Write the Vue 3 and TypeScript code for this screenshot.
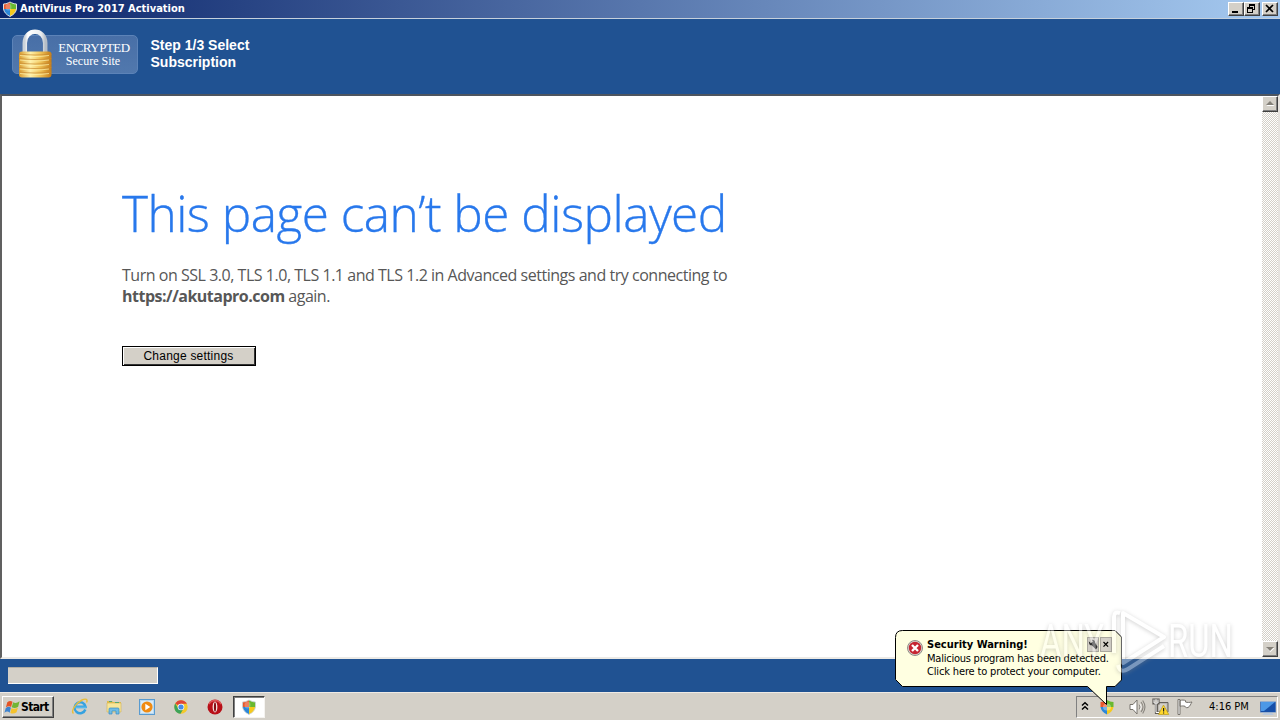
<script setup lang="ts">
const title = 'AntiVirus Pro 2017 Activation'
const host = 'https://akutapro.com'
const shieldParts = [
  { fill: '#e8572c', d: 'M8 1C6 2 4 3 1.500 3V8H8Z' },
  { fill: '#69b82f', d: 'M8 1C10 2 12 3 14.500 3V8H8Z' },
  { fill: '#2c87d8', d: 'M1.500 8H8V15.500C4 13.500 2 11 1.500 8Z' },
  { fill: '#f6c91c', d: 'M8 8H14.500C14 11 12 13.500 8 15.500Z' },
]
const lockBands = [54, 58.5, 63, 67.5, 72]
</script>

<template>
  <div class="screen">
    <header class="titlebar">
      <svg class="shield" viewBox="0 0 16 16"><path v-for="p in shieldParts" :key="p.fill" :fill="p.fill" :d="p.d" /><path d="M8 1C10 2 12 3 14.500 3V8C14 11 12 13.500 8 15.500C4 13.500 2 11 1.500 8V3C4 3 6 2 8 1Z" fill="none" stroke="#d9dde0" stroke-width="1" /><ellipse cx="6.500" cy="6" rx="3" ry="3.500" fill="#fff" opacity=".25" /></svg>
      <span class="title-text">{{ title }}</span>
      <div class="controls">
        <button class="ctl"><svg viewBox="0 0 14 12" shape-rendering="crispEdges"><path d="M3 8h6v2H3z" /></svg></button>
        <button class="ctl"><svg viewBox="0 0 14 12" shape-rendering="crispEdges"><path d="M4 1h6v6H8V6h1V3H5v1H4zM2 4h6v6H2zM3 6v3h4V6z" fill-rule="evenodd" /></svg></button>
        <button class="ctl close"><svg viewBox="0 0 14 12"><path d="M3 2l7 7M10 2l-7 7" stroke="#000" stroke-width="1.700" /></svg></button>
      </div>
    </header>

    <section class="banner">
      <div class="badge">
        <span class="enc">ENCRYPTED</span>
        <span class="secure">Secure Site</span>
        <svg class="lock" viewBox="17 28 36 52">
          <defs>
            <linearGradient id="gold"><stop offset="0" stop-color="#d89a2c" /><stop offset=".35" stop-color="#fff0a8" /><stop offset=".65" stop-color="#f0c45a" /><stop offset="1" stop-color="#c47b16" /></linearGradient>
            <linearGradient id="steel"><stop offset="0" stop-color="#ccd3da" /><stop offset=".15" stop-color="#fff" /><stop offset=".8" stop-color="#e9edf0" /><stop offset="1" stop-color="#b6bec7" /></linearGradient>
          </defs>
          <path d="M24.800 53V43C24.800 28 45.200 28 45.200 43V53" fill="none" stroke="url(#steel)" stroke-width="4.500" />
          <rect x="19" y="51.500" width="32.500" height="26" rx="3" fill="url(#gold)" />
          <path v-for="y in lockBands" :key="y" :d="`M19 ${y}Q35 ${y + 2} 51.500 ${y}`" fill="none" stroke="#c88930" stroke-width="1.200" opacity=".7" />
          <path v-for="y in lockBands" :key="'h' + y" :d="`M20 ${y + 1.500}Q35 ${y + 3.500} 49 ${y + 1.500}`" fill="none" stroke="#fff3ae" stroke-width="1.200" opacity=".7" />
        </svg>
      </div>
      <div class="step">Step 1/3 Select<br>Subscription</div>
    </section>

    <main class="viewport">
      <article class="page">
        <h1><span>This page can’t be displayed</span></h1>
        <p class="line first">Turn on SSL 3.0, TLS 1.0, TLS 1.1 and TLS 1.2 in Advanced settings and try connecting to</p>
        <p class="line second"><b>{{ host }}</b> <span>again.</span></p>
        <button class="change">Change settings</button>
      </article>
      <div class="scrollbar">
        <button class="arrow"><svg viewBox="0 0 12 12"><path d="M2.500 8h8L6.500 4z" fill="#fff" /><path d="M2 7h8L6 3z" fill="#848078" /></svg></button>
        <button class="arrow"><svg viewBox="0 0 12 12"><path d="M2.500 5h8L6.500 9z" fill="#fff" /><path d="M2 4h8L6 8z" fill="#848078" /></svg></button>
      </div>
    </main>

    <footer class="bottom"><div class="progress"></div></footer>

    <nav class="taskbar">
      <button class="start">
        <svg viewBox="0 0 18 16"><path d="M3.500 3Q6.500 .5 9 2.500L7.500 8Q5 6 2 8.500Z" fill="#e45425" /><path d="M9.700 3Q12.500 5 16.500 2L15 7.700Q11.500 10 8.200 8.300Z" fill="#72b535" /><path d="M1.800 9.200Q5 6.700 7.300 8.700L6 14Q3.500 11.500 .5 14Z" fill="#3d83cf" /><path d="M8 9Q11 11 14.800 8.500L13.300 13.500Q10 16 6.700 14.300Z" fill="#f5c22c" /></svg>
        <span>Start</span>
      </button>
      <div class="launch">
        <svg viewBox="0 0 18 18"><path d="M14.300 11.500A5.500 5.500 0 1 1 14.500 8.700H5" fill="none" stroke="#36a2e0" stroke-width="2.500" /><path d="M4.200 9.500H15.500" stroke="#55b8ec" stroke-width="1.800" /><path d="M2.500 15.500C-.5 13 5 5 11 2C15 .2 17 1.500 15.500 4.500" fill="none" stroke="#e9bd37" stroke-width="1.400" /></svg>
        <svg viewBox="0 0 18 18"><path d="M2 3h5l1 1h8v10H2z" fill="#e1bc50" /><path d="M2 5h14v9H2z" fill="#f7e69a" stroke="#d4b452" stroke-width=".6" /><path d="M4 3.500h3M10 4.500h4" stroke="#58a773" /><path d="M4 16v-5q0-1 1-1h8q1 0 1 1v5h-3v-3H7v3z" fill="#70bce5" stroke="#358cc4" stroke-width=".7" /></svg>
        <svg viewBox="0 0 18 18"><rect x="1.500" y="1.500" width="15" height="15" fill="#b8d8f0" stroke="#599bd0" /><rect x="3" y="3" width="12" height="12" fill="#d8ebf8" /><circle cx="9" cy="9" r="5.600" fill="#f08b12" /><path d="M7.300 5.800L12.300 9l-5 3.200z" fill="#fff" /></svg>
        <svg viewBox="0 0 18 18"><circle cx="9" cy="9" r="6.700" fill="#f4c92b" /><path d="M9 9L3.200 5.600A6.700 6.700 0 0 1 14.900 5.800H9Z" fill="#df4338" /><path d="M3.200 5.600A6.700 6.700 0 0 0 8.500 15.700L11.500 10.500L6 10Z" fill="#3da35a" /><circle cx="9" cy="9" r="3.300" fill="#fff" /><circle cx="9" cy="9" r="2.600" fill="#478be6" /></svg>
        <svg viewBox="0 0 18 18"><circle cx="9" cy="9" r="7.500" fill="#b80f18" /><path d="M3 6a7 7 0 0 1 12 0" fill="none" stroke="#f07474" stroke-width="1.500" opacity=".7" /><ellipse cx="9" cy="9" rx="2.400" ry="5.400" fill="#f9e7e5" /><ellipse cx="9" cy="9" rx="1.100" ry="4.700" fill="#830c12" /></svg>
      </div>
      <div class="task-active">
        <svg class="shield" viewBox="0 0 16 16"><path v-for="p in shieldParts" :key="p.fill" :fill="p.fill" :d="p.d" /><path d="M8 1C10 2 12 3 14.500 3V8C14 11 12 13.500 8 15.500C4 13.500 2 11 1.500 8V3C4 3 6 2 8 1Z" fill="none" stroke="#c9d3da" stroke-width=".8" /><ellipse cx="6.500" cy="6" rx="3" ry="3.500" fill="#fff" opacity=".25" /></svg>
      </div>
      <div class="tray">
        <svg class="chev" viewBox="0 0 8 10"><path d="M1 4.500L4 1.800L7 4.500M1 8.500L4 5.800L7 8.500" fill="none" stroke="#000" stroke-width="1.500" /></svg>
        <svg class="shield tray-shield" viewBox="0 0 16 16"><path v-for="p in shieldParts" :key="p.fill" :fill="p.fill" :d="p.d" /><ellipse cx="8" cy="8" rx="4" ry="3.500" fill="#fff" opacity=".35" /></svg>
        <svg class="speaker" viewBox="0 0 18 18"><path d="M2 6.500h3L9 2v14l-4-4.500H2z" fill="#fff" stroke="#77736c" stroke-width="1" /><path d="M11 6.500q2 2.500 0 5M13 4q4 5 0 10M14.700 2.500q4.500 6.500 0 13" fill="none" stroke="#87837d" stroke-width="1.100" /><path d="M12 6q2.500 3 0 6" fill="none" stroke="#fff" stroke-width=".8" /></svg>
        <svg class="network" viewBox="0 0 18 18"><path d="M5.500 4.500h10.500v9.500H5.500z" fill="#bcb8b1" stroke="#65625c" /><path d="M7 6h7.500v6H7z" fill="#d3d0ca" /><path d="M1.500 1.500h5v4h-5zM4 5.500v9.500h3" fill="none" stroke="#5e5b56" stroke-width="2.200" /><path d="M2 1.500v3.500h4V1.500M4 1v2M4 5v9.500h3" fill="none" stroke="#fff" stroke-width="1" /><path d="M11.500 7L16.800 16.500H6.500z" fill="#ffd72b" stroke="#b99b1a" stroke-width=".7" /><path d="M11.600 10v3.500M11.600 14.500v1" stroke="#222" stroke-width="1.200" /></svg>
        <svg class="flag" viewBox="0 0 18 18"><path d="M2 1.500h2v15H2zM4 2.500c2-.7 4-.5 5.500 0v1.500c2 .7 4 .5 6.500 0c-1.500 2-1.500 4-4 5.500c-2 .5-2.500 0-3-1.200c-1.500-.5-3-.5-5 0z" fill="#fff" stroke="#77736d" stroke-width="1" /></svg>
        <span class="clock">4:16 PM</span>
        <svg class="desktop" viewBox="0 0 16 16"><path d="M0 1.500h16v11H0z" fill="#164fa8" stroke="#a3b7cf" stroke-width=".8" /><path d="M1 2h14L4 11H1z" fill="#4d98e6" /><path d="M4 13h8l2 2H2z" fill="#b9c8db" /></svg>
      </div>
    </nav>

    <aside class="balloon">
      <svg class="balloon-shape" viewBox="0 0 228 76"><path d="M7.500 .5H220L226.500 7V50L220 56.500H211.500V74.500L192.500 56.500H7.500L.5 49.500V7.500Q.5 .5 7.500 .5Z" fill="#ffffe1" stroke="#000" /></svg>
      <svg class="error" viewBox="0 0 16 16"><circle cx="8" cy="8" r="7.500" fill="#d9d5cf" stroke="#918b87" /><circle cx="8" cy="8" r="6.200" fill="#c62532" /><path d="M5 5l6 6M11 5l-6 6" stroke="#fff" stroke-width="2.300" /></svg>
      <strong>Security Warning!</strong>
      <p class="msg one">Malicious program has been detected.</p>
      <p class="msg two">Click here to protect your computer.</p>
      <div class="balloon-controls">
        <span><svg viewBox="0 0 12 14"><path d="M1 3l2.500 2.500L6 3 4.500 1.500q4-.5 4 3l3 5.500-2 3-5-5Q1 8 1 3z" fill="#222" /></svg></span>
        <span><svg viewBox="0 0 12 14"><path d="M3 4l5.500 5.500M8.500 4L3 9.500" stroke="#000" stroke-width="1.500" /></svg></span>
      </div>
    </aside>

    <svg class="watermark" viewBox="0 0 210 76">
      <g class="mark">
        <text x="4" y="49" textLength="64" lengthAdjust="spacingAndGlyphs">ANY</text>
        <text x="132" y="49" textLength="65" lengthAdjust="spacingAndGlyphs">RUN</text>
        <path d="M87 5L128 29L87 55Z M78 45V9Q78 3 84 5 M82 57Q84 66 92 61L128 38" fill="none" stroke="#fff" stroke-width="4" stroke-linejoin="round" />
      </g>
    </svg>
  </div>
</template>

<style>
html, body { margin: 0; overflow: hidden; }
</style>

<style scoped>
* { box-sizing: border-box; }
.screen { position: relative; width: 1280px; height: 720px; overflow: hidden; background: #d4d0c8; display: flex; flex-direction: column; font-family: "DejaVu Sans Condensed", "DejaVu Sans", sans-serif; }
svg { display: block; flex: none; }
button { padding: 0; margin: 0; border-radius: 0; font: inherit; color: #000; }
.titlebar { height: 19px; border-bottom: 1px solid #c5d0dc; background: linear-gradient(90deg, #0a246a, #a6caf0); display: flex; align-items: flex-start; padding-left: 2px; flex: none; }
.shield { width: 16px; height: 16px; }
.titlebar .shield { margin-top: 1px; }
.title-text { margin-left: 2px; font: bold 11px/18px "DejaVu Sans Condensed", sans-serif; font-stretch: condensed; color: #fff; letter-spacing: -.01px; white-space: nowrap; }
.controls { margin: 2px 2px 0 auto; display: flex; }
.ctl, .arrow { background: #d4d0c8; border: 1px solid; border-color: #fff #404040 #404040 #fff; box-shadow: inset -1px -1px #808080; }
.ctl { width: 16px; height: 14px; }
.ctl svg { width: 14px; height: 12px; }
.ctl.close { margin-left: 2px; }
.banner { height: 76px; background: #205292; flex: none; display: flex; }
.badge { position: relative; width: 126px; height: 39px; margin: 16px 0 0 12px; border: 1px solid #5c83b8; border-radius: 5px; background: linear-gradient(#486fa7, #5178ad); color: #fff; font-family: "Liberation Serif", serif; text-align: center; padding: 4px 3px 0 42px; }
.enc { display: block; font-size: 13px; line-height: 15px; white-space: nowrap; letter-spacing: -.5px; margin-left: -1px; }
.secure { display: block; font-size: 12px; line-height: 12px; margin-left: -3px; }
.lock { position: absolute; left: 4px; top: -8px; width: 36px; height: 52px; }
.step { margin: 18px 0 0 12.500px; color: #fff; font: bold 14px/17px "Liberation Sans", sans-serif; }
.viewport { height: 565px; margin-top: -1px; flex: none; border-top: 2px solid #4d555f; border-left: 2px solid #606060; border-right: 2px solid #e6e3df; border-bottom: 2px solid #eceae6; background: #fff; display: flex; }
.page { flex: 1; padding: 90px 0 0 120px; }
h1 { margin: 0; height: 54px; color: #2878ec; font: 300 49.500px/54px "Open Sans", sans-serif; white-space: nowrap; letter-spacing: -.5px; -webkit-text-stroke: .35px #2878ec; }
.line { margin: 0; height: 21px; color: #575757; font: 16px/21px "Open Sans", sans-serif; white-space: nowrap; letter-spacing: -.47px; }
.second { letter-spacing: -.5px; }
.first { margin-top: 25px; }
.change { display: block; margin-top: 39px; width: 134px; height: 20px; background: #d4d0c8; border: 1px solid #000; box-shadow: inset 1px 1px #fff, inset -1px -1px #333; font: 12px/17px "Liberation Sans", sans-serif; letter-spacing: .22px; padding-right: 1px; }
.scrollbar { width: 16px; display: flex; flex-direction: column; justify-content: space-between; background: conic-gradient(#d4d0c8 25%, #fff 0 50%, #d4d0c8 0 75%, #fff 0) 0 0 / 2px 2px; }
.arrow { width: 16px; height: 16px; }
.arrow svg { width: 12px; height: 12px; margin: 1px; }
.bottom { height: 33px; flex: none; background: #205292; padding: 8px; }
.progress { width: 150px; height: 17px; background: #d4d0c8; border-right: 1px solid #fff; border-bottom: 1px solid #fff; border-top: 1px solid #b0aca4; }
.taskbar { height: 28px; flex: none; border-top: 1px solid #eeeae5; background: #d4d0c8; display: flex; }
.start { margin: 3px 0 0 2px; width: 52px; height: 22px; display: flex; align-items: center; padding-left: 1px; background: #d4d0c8; border: 1px solid; border-color: #fff #404040 #404040 #fff; box-shadow: inset -1px -1px #808080; font: bold 12px/20px "DejaVu Sans Condensed", sans-serif; font-stretch: condensed; letter-spacing: -.65px; }
.start svg { width: 17px; height: 16px; }
.launch { margin: 5px 0 0 17px; display: flex; gap: 15.700px; width: 162px; }
.launch svg { width: 18px; height: 18px; }
.task-active { width: 32px; height: 22px; margin-top: 3px; background: #fff; border: 1px solid; border-color: #404040 #f5f3f0 #f5f3f0 #404040; box-shadow: inset 1px 1px #808080; display: flex; align-items: center; justify-content: center; }
.tray { margin: 3px 2px 0 auto; width: 202px; height: 22px; border: 1px solid; border-color: #808080 #fff #fff #808080; display: flex; align-items: center; padding-left: 4px; }
.chev { width: 8px; height: 10px; margin-top: -3px; }
.tray-shield { margin-left: 10px; }
.speaker { width: 18px; height: 18px; margin-left: 13px; }
.network { width: 18px; height: 18px; margin-left: 6px; }
.flag { width: 18px; height: 18px; margin-left: 6px; }
.clock { font-size: 11px; line-height: 16px; margin-left: 15px; width: 42px; white-space: nowrap; letter-spacing: 0; font-stretch: condensed; }
.desktop { width: 16px; height: 16px; margin-left: auto; margin-right: 1px; margin-top: 2px; }
.balloon { position: absolute; left: 895px; top: 630px; width: 228px; height: 76px; color: #000; padding: 8px 0 0 32px; }
.balloon-shape { position: absolute; inset: 0; width: 228px; height: 76px; }
.error { position: absolute; left: 12px; top: 10px; width: 16px; height: 16px; }
.balloon strong, .msg { position: relative; display: block; margin: 0; height: 13px; font-size: 11px; line-height: 13px; white-space: nowrap; font-stretch: condensed; }
.balloon strong { letter-spacing: 0; height: 14px; }
.msg { letter-spacing: -.15px; }
.msg.one { letter-spacing: -.23px; }
.balloon-controls { position: absolute; left: 192px; top: 7px; display: flex; gap: 1px; }
.balloon-controls span { width: 12px; height: 15px; background: #d4d0c8; border: 1px solid #aaa79e; }
.balloon-controls svg { width: 10px; height: 13px; }
.watermark { position: absolute; left: 1036px; top: 608px; width: 210px; height: 76px; overflow: visible; pointer-events: none; }
.mark { opacity: .4; filter: drop-shadow(0 1px 2px #888); fill: #fff; font: 400 46px Roboto, sans-serif; }
</style>
